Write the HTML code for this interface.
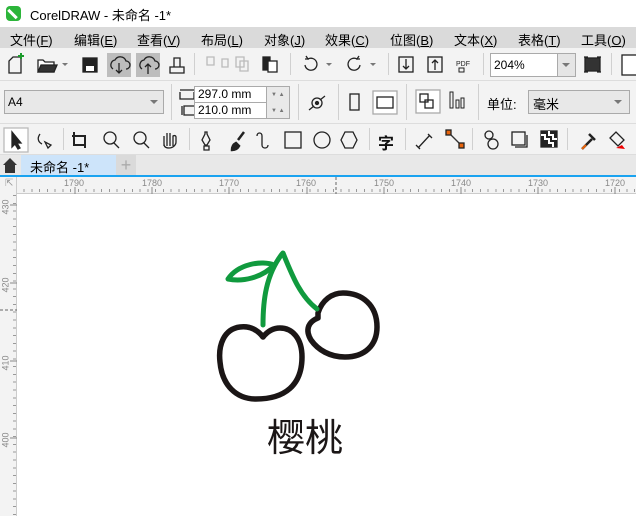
<!DOCTYPE html>
<html><head><meta charset="utf-8"><style>
*{margin:0;padding:0;box-sizing:border-box}
body{width:636px;height:516px;overflow:hidden;background:#fff;font-family:"Liberation Sans","Noto Sans CJK SC",sans-serif;position:relative;color:#000}
.a{position:absolute}
.menu span{position:absolute;top:3px;font-size:13px}
.sep{position:absolute;width:1px;background:#d0d0d0}
.rn{position:absolute;font-size:9px;color:#888;top:2px}
.ln{position:absolute;font-size:9px;color:#888;transform:rotate(-90deg);left:-2px}
.inp{position:absolute;background:#fff;border:1px solid #aaa;font-size:12px;padding-left:3px}
</style></head><body>
<div class="a" style="left:6px;top:6px;width:15px;height:15px;border-radius:4px;background:#2cb53a"></div>
<div class="a" style="left:11px;top:8px;width:3px;height:12px;background:#fff;transform:rotate(-45deg)"></div>
<div class="a" style="left:30px;top:5px;font-size:13px">CorelDRAW - 未命名 -1*</div>
<div class="a menu" style="left:0;top:27px;width:636px;height:21px;background:#dadada">
<span style="left:10px">文件(<u>F</u>)</span><span style="left:74px">编辑(<u>E</u>)</span><span style="left:137px">查看(<u>V</u>)</span><span style="left:201px">布局(<u>L</u>)</span><span style="left:264px">对象(<u>J</u>)</span><span style="left:325px">效果(<u>C</u>)</span><span style="left:390px">位图(<u>B</u>)</span><span style="left:454px">文本(<u>X</u>)</span><span style="left:518px">表格(<u>T</u>)</span><span style="left:581px">工具(<u>O</u>)</span>
</div>
<div class="a" style="left:0;top:48px;width:636px;height:107px;background:#f3f3f3"></div>
<div class="a" style="left:0;top:80px;width:636px;height:1px;background:#ddd"></div>
<div class="a" style="left:0;top:123px;width:636px;height:1px;background:#ddd"></div>
<div class="a" style="left:0;top:154px;width:636px;height:1px;background:#ddd"></div>
<svg class="a" style="left:0;top:48px" width="636" height="107" fill="none" stroke="#222" stroke-width="1.3">
 <path d="M9,25V13l4-4h8v16z"/><path d="M18,8h6M21,5v6" stroke="#1a9a2a" stroke-width="2"/>
 <path d="M38,24V12h5l2,2h9v10z" fill="#fff"/><path d="M38,24l3-7h16l-3,7z" fill="#333"/><path d="M62,15l3,3 3-3z" fill="#777" stroke="none"/>
 <rect x="83" y="10" width="14" height="14" fill="#222"/><rect x="86" y="18" width="8" height="5" fill="#fff" stroke="none"/>
 <rect x="107" y="5" width="24" height="24" fill="#bdbdbd" stroke="none"/><rect x="136" y="5" width="24" height="24" fill="#bdbdbd" stroke="none"/>
 <path d="M113,21a5,5 0 0 1 2-9 6,6 0 0 1 11,1 4,4 0 0 1 0,8M119,15v10M116,22l3,3 3-3"/>
 <path d="M142,21a5,5 0 0 1 2-9 6,6 0 0 1 11,1 4,4 0 0 1 0,8M148,26v-10M145,19l3-3 3,3"/>
 <path d="M170,25v-6h14v6zM174,19v-9h6v9"/>
 <path d="M207,9h7v8h-7zM222,11h6v8h-6z" stroke="#bbb"/><path d="M236,9h8v10h-8zM240,13h8v10h-8z" stroke="#bbb"/>
 <rect x="263" y="9" width="7" height="13" fill="#222"/><rect x="268" y="13" width="9" height="11" fill="#fff"/>
 <path d="M305,17a6,6 0 1 0 3-6l-2-3M305,11h4" /><path d="M326,15l3,3 3-3z" fill="#777" stroke="none"/>
 <path d="M360,17a6,6 0 1 1-3-6l2-3M360,11h-4"/><path d="M370,15l3,3 3-3z" fill="#777" stroke="none"/>
 <rect x="399" y="9" width="14" height="15"/><path d="M406,11v10M403,18l3,3 3-3"/>
 <rect x="428" y="9" width="14" height="15"/><path d="M435,22v-10M432,15l3-3 3,3"/>
 <text x="456" y="18" font-size="7" fill="#222" stroke="none" font-family="Liberation Sans">PDF</text><rect x="459" y="20" width="5" height="4" stroke-width="1"/>
 <rect x="585" y="10" width="15" height="13" fill="#333"/><path d="M584,9h4M597,9h4M584,24h4M597,24h4"/>
 <rect x="622" y="7" width="16" height="20" fill="#fff"/>
 <path d="M180,42h14M180,44v7h14v-7M182,58v9M184,58h11v9h-11z"/>
 <circle cx="317" cy="55" r="5"/><circle cx="317" cy="55" r="1.5" fill="#222"/><path d="M309,62l5-4M320,52l5-4"/>
 <rect x="350" y="46" width="9" height="16"/><rect x="373" y="43" width="24" height="23" fill="#fff" stroke="#aaa"/><rect x="377" y="49" width="16" height="11"/>
 <rect x="416" y="42" width="24" height="23" fill="#fff" stroke="#aaa"/><rect x="420" y="46" width="8" height="8"/><rect x="425" y="52" width="8" height="8"/>
 <path d="M450,44v16h3v-16zM456,52v8h3v-8zM461,50v10h3v-10z" stroke-width="1"/>
 <rect x="4" y="80" width="24" height="24" fill="#fff" stroke="#bbb"/><path d="M12,84v15l3-3 3,5 2-1-3-5h4z" fill="#222"/>
 <path d="M40,86c-3,4 -2,8 2,10M45,94l6,3-3,3z"/>
 <path d="M74,84v13h10M72,88h13v12" stroke-width="2"/>
 <circle cx="110" cy="90" r="6"/><path d="M114,95l5,5"/><circle cx="140" cy="90" r="6"/><path d="M144,95l5,5"/>
 <path d="M164,98v-10m3,10v-13m3,13v-13m3,13v-10c2-1 3,0 3,1v5c0,3-3,6-7,6s-5-2-5-4"/>
 <path d="M205,84v2l-3,6 3,5h2l3-5-3-6v-2zM204,98h5v4h-5z"/>
 <path d="M244,84l-6,8M232,102c0-4 2-6 4-7l3,3c-1,2-3,4-7,4z" fill="#222" stroke-width="2.5"/>
 <path d="M257,88c0-4 5-4 5,0v9c0,4 6,4 6,0"/>
 <rect x="285" y="84" width="16" height="16"/><circle cx="322" cy="92" r="8"/><path d="M345,84h8l4,8-4,8h-8l-4-8z"/>
 <text x="378" y="101" font-size="16" font-weight="bold" fill="#111" stroke="none" font-family="Noto Sans CJK SC">字</text>
 <path d="M418,100l12-13M416,97l4,4M428,86l4,4"/>
 <path d="M449,85l12,12" stroke="#333"/><rect x="446" y="82" width="5" height="5" fill="#e8640c"/><rect x="459" y="95" width="5" height="5" fill="#e8640c"/>
 <circle cx="489" cy="87" r="4"/><circle cx="493" cy="96" r="5"/>
 <rect x="512" y="84" width="13" height="13"/><path d="M527,87v12h-12"/>
 <rect x="541" y="83" width="16" height="16" fill="#222"/>
 <path d="M541,87h4v4h4v4h4v4M549,83v4h4v4h4" stroke="#fff" stroke-width="2"/>
 <path d="M582,101l10-10M589,86l6,6" stroke-width="2.5"/><path d="M582,101l4-4" stroke="#e8640c" stroke-width="2"/>
 <path d="M610,90l6-6 8,8-6,6z"/><path d="M616,100l6-3 3,4z" fill="#e00" stroke="none"/>
</svg>
<div class="sep" style="left:194px;top:53px;height:22px"></div><div class="sep" style="left:290px;top:53px;height:22px"></div><div class="sep" style="left:388px;top:53px;height:22px"></div><div class="sep" style="left:483px;top:53px;height:22px"></div><div class="sep" style="left:611px;top:53px;height:22px"></div>
<div class="sep" style="left:171px;top:84px;height:36px"></div><div class="sep" style="left:298px;top:84px;height:36px"></div><div class="sep" style="left:338px;top:84px;height:36px"></div><div class="sep" style="left:406px;top:84px;height:36px"></div><div class="sep" style="left:478px;top:84px;height:36px"></div>
<div class="sep" style="left:63px;top:128px;height:22px"></div><div class="sep" style="left:189px;top:128px;height:22px"></div><div class="sep" style="left:369px;top:128px;height:22px"></div><div class="sep" style="left:405px;top:128px;height:22px"></div><div class="sep" style="left:472px;top:128px;height:22px"></div><div class="sep" style="left:567px;top:128px;height:22px"></div>
<div class="inp" style="left:490px;top:53px;width:86px;height:24px;padding-top:4px">204%</div>
<div class="a" style="left:557px;top:54px;width:18px;height:22px;background:#e5e5e5;border-left:1px solid #aaa"></div>
<div class="a" style="left:562px;top:63px;border:4px solid transparent;border-top-color:#777"></div>
<div class="a" style="left:4px;top:90px;width:160px;height:24px;background:#e8e8e8;border:1px solid #aaa;font-size:12px;padding:4px 0 0 3px">A4</div>
<div class="a" style="left:150px;top:100px;border:4px solid transparent;border-top-color:#777"></div>
<div class="inp" style="left:194px;top:86px;width:73px;height:17px;color:#000">297.0 mm</div>
<div class="inp" style="left:194px;top:102px;width:73px;height:17px">210.0 mm</div>
<div class="a" style="left:266px;top:86px;width:24px;height:33px;background:#e9e9e9;border:1px solid #aaa;font-size:6px;color:#777;line-height:16px;padding-left:4px">▼ ▲<br>▼ ▲</div>
<div class="a" style="left:487px;top:94px;font-size:13px">单位:</div>
<div class="a" style="left:528px;top:90px;width:102px;height:24px;background:#e8e8e8;border:1px solid #aaa;font-size:13px;padding:3px 0 0 4px">毫米</div>
<div class="a" style="left:614px;top:100px;border:4px solid transparent;border-top-color:#777"></div>
<div class="a" style="left:0;top:155px;width:636px;height:21px;background:#e8e8e8"></div>
<svg class="a" style="left:2px;top:157px" width="16" height="17"><path d="M1,8L8,1l7,7h-2v8H3V8z" fill="#333"/></svg>
<div class="a" style="left:21px;top:155px;width:95px;height:21px;background:#cde4fa;font-size:13px;padding:2px 0 0 9px">未命名 -1*</div>
<div class="a" style="left:116px;top:155px;width:20px;height:21px;background:#dadada;color:#aaa;font-size:18px;line-height:20px;text-align:center">+</div>
<div class="a" style="left:0;top:175px;width:636px;height:2px;background:#1aa3f0"></div>
<div class="a" style="left:0;top:177px;width:636px;height:17px;background:#f3f3f3;border-bottom:1px solid #ccc"></div>
<div class="a" style="left:0;top:177px;width:17px;height:339px;background:#f3f3f3;border-right:1px solid #ccc"></div>
<div class="a" style="left:5px;top:178px;font-size:10px;color:#999">⇱</div>
<div class="rn" style="left:64px;top:178px">1790</div><div class="rn" style="left:142px;top:178px">1780</div><div class="rn" style="left:219px;top:178px">1770</div><div class="rn" style="left:296px;top:178px">1760</div><div class="rn" style="left:374px;top:178px">1750</div><div class="rn" style="left:451px;top:178px">1740</div><div class="rn" style="left:528px;top:178px">1730</div><div class="rn" style="left:605px;top:178px">1720</div>
<div class="ln" style="top:202px">430</div><div class="ln" style="top:280px">420</div><div class="ln" style="top:358px">410</div><div class="ln" style="top:435px">400</div>
<svg class="a" style="left:0;top:177px" width="636" height="339">
<g stroke="#888" stroke-width="1">
<path d="M75,10v7M152,10v7M229,10v7M307,10v7M384,10v7M461,10v7M538,10v7M615,10v7"/>
<path d="M10,28h7M10,106h7M10,184h7M10,261h7"/>
</g>
<path d="M336,0v17M0,133h17" stroke="#666" stroke-dasharray="3,2"/>
</svg>
<div class="a" style="left:18px;top:189px;width:618px;height:3px;background-image:repeating-linear-gradient(90deg,#999 0 1px,transparent 1px 7.73px);background-position:-2px 0"></div>
<div class="a" style="left:13px;top:195px;width:3px;height:321px;background-image:repeating-linear-gradient(180deg,#999 0 1px,transparent 1px 7.78px)"></div>
<svg class="a" style="left:0;top:0" width="636" height="516" fill="none" stroke-linecap="round" stroke-linejoin="round">
<g stroke="#1b1616" stroke-width="5.5">
<path d="M263,337C256,328 248,326 240,327C224,329 218,345 220,362C222,385 236,399 256,399C285,399 302,385 302,357C302,338 292,328 280,328C272,328 267,332 263,337Z"/>
<path d="M318,313C322,300 332,293 343,293C362,293 377,305 377,327C377,345 365,357 345,357C330,357 318,350 311,340C305,330 308,322 318,318Z"/>
</g>
<g stroke="#109a3e" stroke-width="5">
<path d="M263,325C263,300 266,275 282,254"/>
<path d="M283,253C292,275 300,296 317,309"/>
<path d="M228,279C238,264 262,260 274,265C262,278 242,282 228,279Z"/>
</g>
</svg>
<div class="a" style="left:267px;top:412px;font-size:38px;color:#1b1616;font-family:'Noto Sans CJK SC',sans-serif;line-height:46px">樱桃</div>
</body></html>
